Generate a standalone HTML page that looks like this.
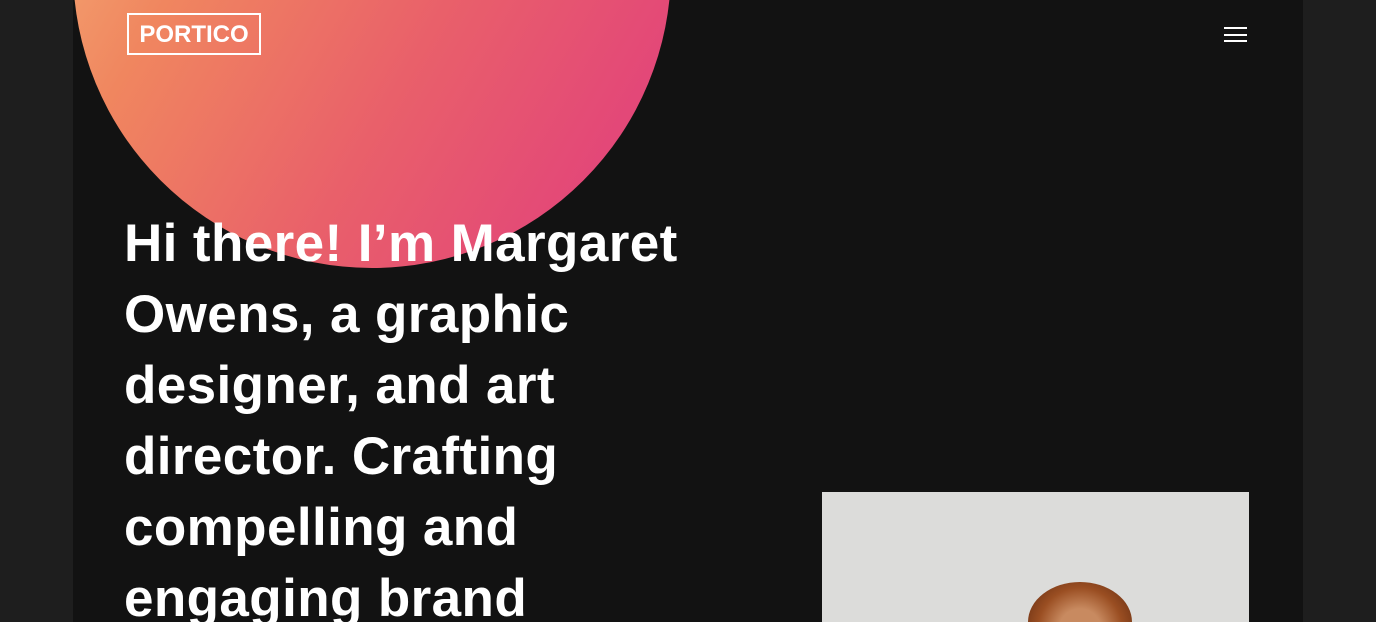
<!DOCTYPE html>
<html><head><style>
html,body{margin:0;padding:0;width:1376px;height:622px;overflow:hidden;background:#1e1e1e;font-family:"Liberation Sans",sans-serif}
.main{position:absolute;left:73px;top:0;width:1230px;height:622px;background:#121212;overflow:hidden}
.circle{position:absolute;left:0;top:-330px;width:598px;height:598px;border-radius:50%;background:linear-gradient(120deg,#f5b27a 5%,#f0865f 30%,#e9606a 60%,#e2447a 90%)}
.logo{position:absolute;left:54px;top:13px;width:130px;height:38px;border:2px solid #fff;color:#fff;font-size:24px;font-weight:bold;line-height:40px;text-align:center;letter-spacing:0}
.ham{position:absolute;left:1151px;top:27px;width:23px}
.ham div{height:2px;background:#fff;margin-bottom:4.5px}
h1{position:absolute;left:51px;top:208px;margin:0;color:#fff;font-weight:bold;font-size:53px;line-height:71px;width:620px;height:414px;overflow:hidden;letter-spacing:0.4px}
.photo{position:absolute;left:749px;top:492px;width:427px;height:130px;background:#dcdcda;overflow:hidden}
.hair{position:absolute;left:206px;top:90px;width:104px;height:80px;border-radius:50% 50% 0 0;background:radial-gradient(circle at 50% 60%,#c88a60 30%,#9a4e22 60%,#7a3a18 80%)}
</style></head><body>
<div class="main">
<div class="circle"></div>
<div class="logo">PORTICO</div>
<div class="ham"><div></div><div></div><div></div></div>
<h1>Hi there! I’m Margaret Owens, a graphic designer, and art director. Crafting compelling and engaging brand</h1>
<div class="photo"><div class="hair"></div></div>
</div>
</body></html>
